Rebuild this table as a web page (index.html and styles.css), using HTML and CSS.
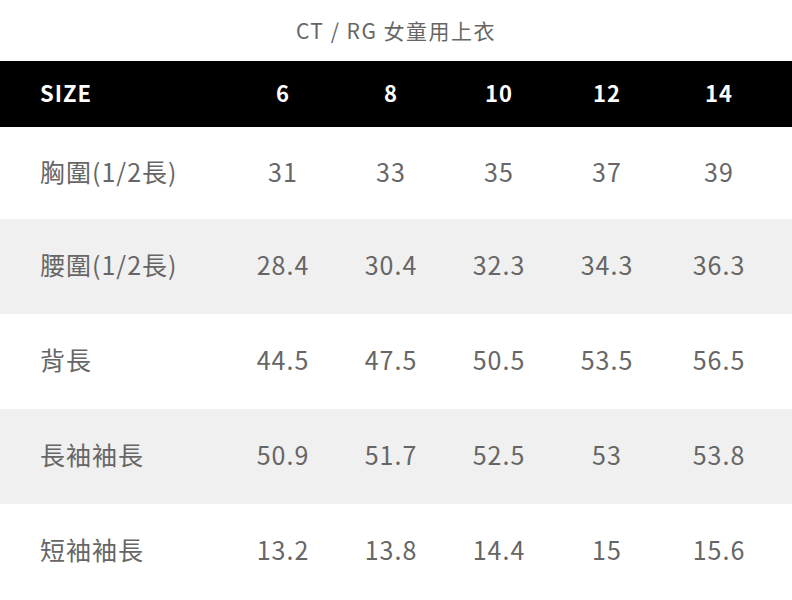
FILE: index.html
```html
<!DOCTYPE html>
<html lang="zh-Hant">
<head>
<meta charset="utf-8">
<title>CT / RG 女童用上衣</title>
<link rel="stylesheet" href="styles.css">
</head>
<body>
<div class="page">
  <h1 class="title">CT / RG 女童用上衣</h1>
  <div class="table">
    <div class="row head">
      <div class="cell label">SIZE</div>
      <div class="cell">6</div>
      <div class="cell">8</div>
      <div class="cell">10</div>
      <div class="cell">12</div>
      <div class="cell">14</div>
    </div>
    <div class="row first">
      <div class="cell label">胸圍(1/2長)</div>
      <div class="cell">31</div>
      <div class="cell">33</div>
      <div class="cell">35</div>
      <div class="cell">37</div>
      <div class="cell">39</div>
    </div>
    <div class="row alt">
      <div class="cell label">腰圍(1/2長)</div>
      <div class="cell">28.4</div>
      <div class="cell">30.4</div>
      <div class="cell">32.3</div>
      <div class="cell">34.3</div>
      <div class="cell">36.3</div>
    </div>
    <div class="row">
      <div class="cell label">背長</div>
      <div class="cell">44.5</div>
      <div class="cell">47.5</div>
      <div class="cell">50.5</div>
      <div class="cell">53.5</div>
      <div class="cell">56.5</div>
    </div>
    <div class="row alt">
      <div class="cell label">長袖袖長</div>
      <div class="cell">50.9</div>
      <div class="cell">51.7</div>
      <div class="cell">52.5</div>
      <div class="cell">53</div>
      <div class="cell">53.8</div>
    </div>
    <div class="row">
      <div class="cell label">短袖袖長</div>
      <div class="cell">13.2</div>
      <div class="cell">13.8</div>
      <div class="cell">14.4</div>
      <div class="cell">15</div>
      <div class="cell">15.6</div>
    </div>
  </div>
</div>
</body>
</html>
```

FILE: styles.css
```css
html, body {
  margin: 0;
  padding: 0;
  background: #ffffff;
}

body {
  font-family: "Noto Sans CJK TC", "Noto Sans", sans-serif;
  color: #666666;
}

.page {
  width: 792px;
}

.title {
  margin: 0;
  height: 61px;
  display: flex;
  align-items: center;
  justify-content: center;
  font-size: 21px;
  font-weight: 400;
  color: #666666;
  letter-spacing: 1.5px;
  padding-bottom: 2px;
  box-sizing: border-box;
}

.table {
  display: flex;
  flex-direction: column;
}

.row {
  display: grid;
  grid-template-columns: 228px repeat(4, 108px) 116px;
  align-items: center;
  height: 95px;
  box-sizing: border-box;
  padding-bottom: 5px;
  font-size: 25px;
  letter-spacing: 1px;
}

.row.first {
  height: 92px;
}

.row.alt {
  background: #f0f0f0;
}

.row.head {
  height: 66px;
  padding-bottom: 4px;
  background: #000000;
  color: #ffffff;
  font-weight: 700;
  font-size: 22px;
  letter-spacing: 1px;
}

.cell {
  text-align: center;
  padding-left: 2px;
}

.cell.label {
  text-align: left;
  padding-left: 40px;
}
```
